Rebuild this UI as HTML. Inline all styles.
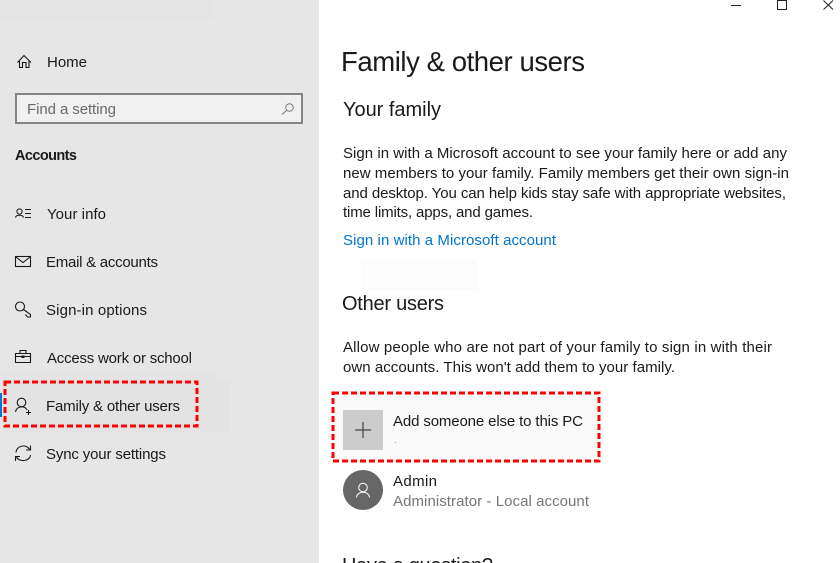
<!DOCTYPE html>
<html><head><meta charset="utf-8"><style>
html,body{margin:0;padding:0;background:#fff;overflow:hidden}
svg{display:block}
text{font-family:"Liberation Sans",sans-serif;font-size:15px;fill:#1a1a1a}
.ic{fill:none;stroke:#1a1a1a;stroke-width:1.1}
</style></head><body>
<svg width="840" height="563" viewBox="0 0 840 563" xmlns="http://www.w3.org/2000/svg">
<rect x="0" y="0" width="319" height="563" fill="#e6e6e6"/>
<rect x="0" y="0" width="214" height="19" fill="#e4e4e4"/>
<rect x="2" y="371" width="214" height="10" fill="#e4e4e4"/>
<rect x="2" y="381" width="227" height="52" fill="#e3e3e3"/>
<rect x="0" y="393" width="2" height="24" fill="#0078d7"/>

<!-- window controls -->
<path d="M731 5.5H741" stroke="#222" stroke-width="1" fill="none"/>
<rect x="777.5" y="0.5" width="9" height="9" fill="none" stroke="#222"/>
<path d="M823.5 0.5L833 9.5M833 0.5L823.5 9.5" stroke="#222" fill="none"/>

<!-- sidebar -->
<path class="ic" d="M17.5 62.5L24 55.5L31 62.5M19.5 61V67.5H22.5V62.5H26V67.5H29V61"/>
<text x="47" y="67" textLength="40">Home</text>
<rect x="16" y="94" width="286" height="29" fill="#f0f0f0" stroke="#858585" stroke-width="2"/>
<text x="27" y="114" textLength="89" style="fill:#6a6a6a">Find a setting</text>
<circle cx="289.5" cy="107.5" r="3.8" fill="none" stroke="#777" stroke-width="1"/>
<path d="M286.5 110.5L282 114.5" stroke="#777" fill="none"/>
<text x="15" y="160" textLength="62" style="font-weight:bold;font-size:14.5px">Accounts</text>

<circle cx="19.5" cy="211.5" r="2.6" fill="none" stroke="#1a1a1a"/>
<path class="ic" d="M15.5 217.5C16 214.5 23 214.5 23.5 217.5M25 209.5H31M25 213.5H31M25 217.5H31"/>
<text x="47" y="219" textLength="59">Your info</text>

<rect x="15.5" y="256.5" width="15" height="10" fill="none" stroke="#1a1a1a" stroke-width="1.1"/>
<path class="ic" d="M16 257L23 262.5L30 257"/>
<text x="46" y="267" textLength="112">Email &amp; accounts</text>

<circle cx="20" cy="306.5" r="4.5" fill="none" stroke="#1a1a1a" stroke-width="1.1"/>
<path class="ic" d="M23.5 309.5L30.5 314.5V317H27.5L25.5 314.5"/>
<text x="46" y="315" textLength="101">Sign-in options</text>

<path class="ic" d="M15.5 353.5H30.5V362.5H15.5ZM20 353.5V350.5H26V353.5M15.5 356.5H30.5"/>
<rect x="21.5" y="355.5" width="3" height="2.5" fill="#1a1a1a"/>
<text x="47" y="363" textLength="145">Access work or school</text>

<circle cx="21.5" cy="402.5" r="4.3" fill="none" stroke="#1a1a1a" stroke-width="1.1"/>
<path class="ic" d="M15.5 412C16.5 405.5 25.5 405.5 27 410M26 412.5H31M28.5 410V415"/>
<text x="46" y="411" textLength="134">Family &amp; other users</text>

<path class="ic" d="M16 452.5C16.5 445 27 444 29.5 449.5M30.5 445.5V450H26M30.5 455C30 461.5 19 462.5 16.5 457M15.5 461V456.5H20"/>
<text x="46" y="459" textLength="120">Sync your settings</text>

<rect x="5" y="382" width="192" height="44" fill="none" stroke="#f00" stroke-width="3" stroke-dasharray="6 3"/>

<!-- main -->
<text x="341" y="71" textLength="244" style="font-size:27.5px">Family &amp; other users</text>
<text x="343" y="116" textLength="98" style="font-size:20px">Your family</text>
<text x="343" y="158" textLength="444">Sign in with a Microsoft account to see your family here or add any</text>
<text x="343" y="178" textLength="446">new members to your family. Family members get their own sign-in</text>
<text x="343" y="198" textLength="443">and desktop. You can help kids stay safe with appropriate websites,</text>
<text x="343" y="217" textLength="190">time limits, apps, and games.</text>
<text x="343" y="245" textLength="213" style="fill:#0076d1">Sign in with a Microsoft account</text>
<rect x="361" y="260" width="116" height="30" fill="#fcfcfc"/>
<text x="342" y="310" textLength="102" style="font-size:20px">Other users</text>
<text x="343" y="352" textLength="429">Allow people who are not part of your family to sign in with their</text>
<text x="343" y="372" textLength="332">own accounts. This won't add them to your family.</text>

<rect x="333" y="393" width="266" height="68" fill="#fafafa"/>
<rect x="396" y="461" width="128" height="4" fill="#fcfcfc"/>
<rect x="343" y="410" width="40" height="40" fill="#cccccc"/>
<path d="M363 422V438M355 430H371" stroke="#444" stroke-width="1.2" fill="none"/>
<text x="393" y="426" textLength="190">Add someone else to this PC</text>
<rect x="395" y="442" width="1" height="1" fill="#e08a30"/>
<rect x="333" y="393" width="266" height="68" fill="none" stroke="#f00" stroke-width="3" stroke-dasharray="6 3"/>

<circle cx="363" cy="490" r="20" fill="#666"/>
<circle cx="363" cy="487.5" r="4.3" fill="none" stroke="#fff" stroke-width="1"/>
<path d="M356.5 497.5C357 490.5 369 490.5 369.5 497.5" fill="none" stroke="#fff" stroke-width="1"/>
<text x="393" y="486" textLength="44">Admin</text>
<text x="393" y="506" textLength="196" style="fill:#767676">Administrator - Local account</text>
<text x="342" y="572" textLength="151" style="font-size:20px">Have a question?</text>
</svg>
</body></html>
